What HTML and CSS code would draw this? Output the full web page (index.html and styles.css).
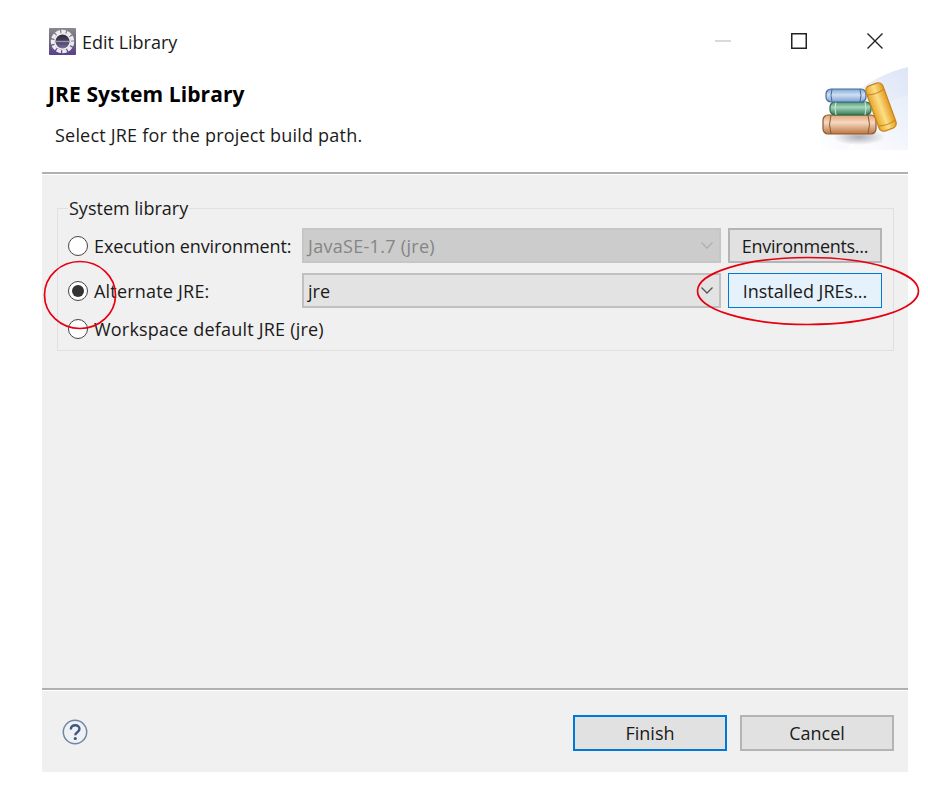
FILE: index.html
```html
<!DOCTYPE html>
<html lang="en">
<head>
<meta charset="utf-8">
<title>Edit Library</title>
<link rel="stylesheet" href="styles.css">
</head>
<body>
<div class="dialog">
  <header class="titlebar">
    <svg class="app-icon" width="27" height="27" viewBox="0 0 27 27">
      <defs>
        <linearGradient id="iconbg" x1="0" y1="0" x2="0" y2="1"><stop offset="0" stop-color="#8a8a8c"/><stop offset=".5" stop-color="#6f6680"/><stop offset="1" stop-color="#5a3f8e"/></linearGradient>
        <linearGradient id="disc" x1="0" y1="0" x2="0" y2="1"><stop offset="0" stop-color="#2c2c34"/><stop offset=".55" stop-color="#4a4560"/><stop offset="1" stop-color="#7b6fa6"/></linearGradient>
      </defs>
      <rect width="27" height="27" rx="1" fill="url(#iconbg)"/>
      <circle cx="13.500" cy="13.500" r="10" fill="none" stroke="#ecebef" stroke-width="3.500" stroke-dasharray="4.500 1.200"/>
      <circle cx="13.500" cy="13.500" r="8.500" fill="#f2f2f4"/>
      <circle cx="13.500" cy="13.500" r="7" fill="url(#disc)"/>
      <rect x="6.500" y="12.800" width="14" height="1.400" fill="#9a8fc4"/>
    </svg>
    <span class="title-text">Edit Library</span>
    <div class="win-controls">
      <svg width="16" height="16" viewBox="0 0 16 16"><path d="M0 8h16" stroke="#d0d0d0" stroke-width="1.600"/></svg>
      <svg width="16" height="16" viewBox="0 0 16 16"><rect x=".75" y=".75" width="14.500" height="14.500" fill="none" stroke="#222" stroke-width="1.500"/></svg>
      <svg width="16" height="16" viewBox="0 0 16 16"><path d="M.5.5l15 15M15.500.5l-15 15" stroke="#222" stroke-width="1.400"/></svg>
    </div>
  </header>
  <section class="banner">
    <div class="banner-text">
      <h1 class="page-title">JRE System Library</h1>
      <p class="page-desc">Select JRE for the project build path.</p>
    </div>
    <svg class="banner-art" width="91" height="83" viewBox="0 0 91 83">
      <defs>
        <linearGradient id="bg" x1="0" y1="1" x2="1" y2="0"><stop offset="0" stop-color="#fff"/><stop offset="1" stop-color="#dde5f6"/></linearGradient>
        <linearGradient id="bg2" x1="0" y1="1" x2="1" y2="0"><stop offset="0" stop-color="#fff"/><stop offset="1" stop-color="#e8edf9"/></linearGradient>
        <linearGradient id="blue" x1="0" y1="0" x2="0" y2="1"><stop offset="0" stop-color="#7fa6d6"/><stop offset=".45" stop-color="#cfe0f3"/><stop offset="1" stop-color="#7d9fcd"/></linearGradient>
        <linearGradient id="green" x1="0" y1="0" x2="0" y2="1"><stop offset="0" stop-color="#4d9a72"/><stop offset=".4" stop-color="#a5d6bb"/><stop offset="1" stop-color="#2f7a55"/></linearGradient>
        <linearGradient id="brown" x1="0" y1="0" x2="0" y2="1"><stop offset="0" stop-color="#e3a67a"/><stop offset=".4" stop-color="#f6d8c0"/><stop offset="1" stop-color="#bd7440"/></linearGradient>
        <linearGradient id="gold" x1="0" y1="0" x2="1" y2="0"><stop offset="0" stop-color="#e9a52c"/><stop offset=".5" stop-color="#fbdf85"/><stop offset="1" stop-color="#e49a20"/></linearGradient>
        <radialGradient id="shadow"><stop offset="0" stop-color="#aeaeb6"/><stop offset="1" stop-color="#aeaeb6" stop-opacity="0"/></radialGradient>
      </defs>
      <path d="M0 83C14 38 50 10 91 0V83Z" fill="url(#bg)"/>
      <path d="M30 83C44 58 66 33 91 28V83Z" fill="url(#bg2)"/>
      <ellipse cx="42" cy="70" rx="26" ry="8" fill="url(#shadow)"/>
      <g stroke-linejoin="round">
        <rect x="6" y="48" width="53" height="19" rx="5" fill="url(#brown)" stroke="#8b5a30" stroke-width="1.200"/>
        <path d="M14 48q-3 9.500 0 19M51 48q3 9.500 0 19" fill="none" stroke="#8b5a30"/>
        <rect x="13" y="35" width="41" height="13" rx="5" fill="url(#green)" stroke="#2c6a4a" stroke-width="1.200"/>
        <path d="M19 35q-2 6 0 13M48 35q2 6 0 13" fill="none" stroke="#d6ecdf"/>
        <rect x="9" y="22" width="40" height="13" rx="5" fill="url(#blue)" stroke="#46699c" stroke-width="1.200"/>
        <path d="M15 22q-2 6.500 0 13M43 22q2 6.500 0 13" fill="none" stroke="#46699c"/>
        <g transform="rotate(-20 64 40)">
          <rect x="55" y="16" width="18" height="48" rx="5" fill="url(#gold)" stroke="#c98518" stroke-width="1.200"/>
          <path d="M55 24q9 3 18 0M55 57q9 3 18 0" fill="none" stroke="#c98518"/>
        </g>
      </g>
    </svg>
  </section>
  <main class="content">
    <fieldset class="group">
      <legend class="group-legend">System library</legend>
      <div class="group-grid">
        <label class="radio-row"><span class="radio"></span><span class="label-tight">Execution environment:</span></label>
        <div class="combo combo-disabled"><span class="combo-value">JavaSE-1.7 (jre)</span><svg width="12" height="7" viewBox="0 0 12 7"><path d="M.5.5l5.500 5.500 5.500-5.500" fill="none" stroke="#b0b0b0" stroke-width="1.300"/></svg></div>
        <button class="btn btn-tight" type="button">Environments...</button>
        <label class="radio-row"><span class="radio radio-on"></span><span class="label-wide">Alternate JRE:</span></label>
        <div class="combo"><span>jre</span><svg width="12" height="7" viewBox="0 0 12 7"><path d="M.5.5l5.500 5.500 5.500-5.500" fill="none" stroke="#555" stroke-width="1.300"/></svg></div>
        <button class="btn btn-hover" type="button">Installed JREs...</button>
        <label class="radio-row radio-row-wide"><span class="radio"></span><span class="label-wide">Workspace default JRE (jre)</span></label>
      </div>
    </fieldset>
  </main>
  <footer class="footer">
    <svg class="help" width="26" height="26" viewBox="0 0 28 28">
      <circle cx="14" cy="14" r="12.600" fill="#eef0f4" stroke="#6f86a6" stroke-width="1.600"/>
      <path d="M9.500 11.200c0-6 9.300-6 9.300-.4 0 3.600-4.500 3.400-4.500 6.700" fill="none" stroke="#3d5680" stroke-width="2.600"/>
      <circle cx="14.300" cy="21" r="1.700" fill="#3d5680"/>
    </svg>
    <div class="footer-buttons">
      <button class="btn btn-default" type="button">Finish</button>
      <button class="btn" type="button">Cancel</button>
    </div>
  </footer>
</div>
<svg class="annotations" width="928" height="785" viewBox="0 0 928 785">
  <ellipse cx="80" cy="295" rx="35.500" ry="33.500" fill="none" stroke="#e60012" stroke-width="1.700"/>
  <ellipse cx="808" cy="291" rx="110.500" ry="33.500" fill="none" stroke="#e60012" stroke-width="1.700"/>
</svg>
</body>
</html>
```
FILE: styles.css
```css
* { box-sizing: border-box; }
html, body { margin: 0; padding: 0; background: #fff; }
body {
  width: 928px;
  height: 785px;
  overflow: hidden;
  position: relative;
  font-family: "Open Sans", "Noto Sans", "Liberation Sans", sans-serif;
  font-size: 18px;
  color: #1a1a1a;
}
.dialog {
  margin-left: 42px;
  width: 866px;
  height: 772px;
  display: flex;
  flex-direction: column;
}
.titlebar {
  height: 67px;
  flex: none;
  display: flex;
  align-items: flex-start;
  padding: 28px 25px 0 7px;
}
.app-icon { flex: none; }
.title-text { margin-left: 6px; line-height: 28px; }
.win-controls {
  margin-left: auto;
  display: flex;
  gap: 60px;
  margin-top: 5px;
}
.banner {
  height: 83px;
  flex: none;
  display: flex;
  justify-content: space-between;
  padding-left: 6px;
}
.banner-text { padding-top: 13px; }
.page-title { margin: 0; font-size: 21px; font-weight: 700; line-height: 28px; color: #000; letter-spacing: .1px; }
.page-desc { margin: 14px 0 0 7px; line-height: 26px; letter-spacing: .2px; }
.banner-art { flex: none; }
.content {
  flex: 1;
  margin-top: 22px;
  background: #f0f0f0;
  border-top: 2px solid #b0b0b0;
  box-shadow: inset 0 1px 0 #fff;
  padding: 23px 14px 0 15px;
}
.group {
  margin: 0;
  padding: 10px 10px 0 10px;
  height: 154px;
  border: 1px solid #e0e0e0;
  min-width: 0;
}
.group-legend { padding: 0 1px; margin-left: 0; line-height: 22px; }
.group-grid {
  display: grid;
  grid-template-columns: 234px 419px 161px;
  grid-template-rows: 35px 35px 44px;
  row-gap: 10px;
  margin-top: -1px;
}
.group-grid > .btn { margin-left: 7px; width: 154px; }
.radio-row {
  display: flex;
  align-items: center;
  gap: 6px;
  white-space: nowrap;
}
.radio-row-wide { grid-column: 1 / -1; align-self: start; margin-top: -1px; height: 24px; }
.label-wide { letter-spacing: .2px; }
.label-tight { letter-spacing: -.1px; }
.radio {
  width: 20px;
  height: 20px;
  flex: none;
  border-radius: 50%;
  border: 1px solid #444;
  background: #fff;
  position: relative;
}
.radio-on::after {
  content: "";
  position: absolute;
  inset: 3px;
  border-radius: 50%;
  background: #333;
}
.combo {
  display: flex;
  align-items: center;
  justify-content: space-between;
  padding: 0 6px 0 4px;
  background: #e3e3e3;
  border: 2px solid #c0c0c0;
}
.combo-disabled { background: #cccccc; border-color: #c6c6c6; color: #858585; }
.combo-value { letter-spacing: .3px; }
.btn {
  font: inherit;
  color: inherit;
  height: 35px;
  padding: 0;
  background: #e1e1e1;
  border: 2px solid #b4b4b4;
}
.btn-tight { letter-spacing: -.3px; }
.btn-hover { background: #e5f1fb; border: 1px solid #0078d7; }
.footer {
  height: 84px;
  flex: none;
  background: #f0f0f0;
  border-top: 2px solid #b0b0b0;
  box-shadow: inset 0 1px 0 #fff;
  display: flex;
  justify-content: space-between;
  align-items: flex-start;
  padding: 25px 14px 0 20px;
}
.help { margin-top: 4px; flex: none; }
.footer-buttons { display: flex; gap: 13px; }
.footer-buttons .btn { width: 154px; height: 36px; }
.footer-buttons .btn-default { border-color: #0078d7; }
.annotations { position: absolute; left: 0; top: 0; pointer-events: none; }
```
